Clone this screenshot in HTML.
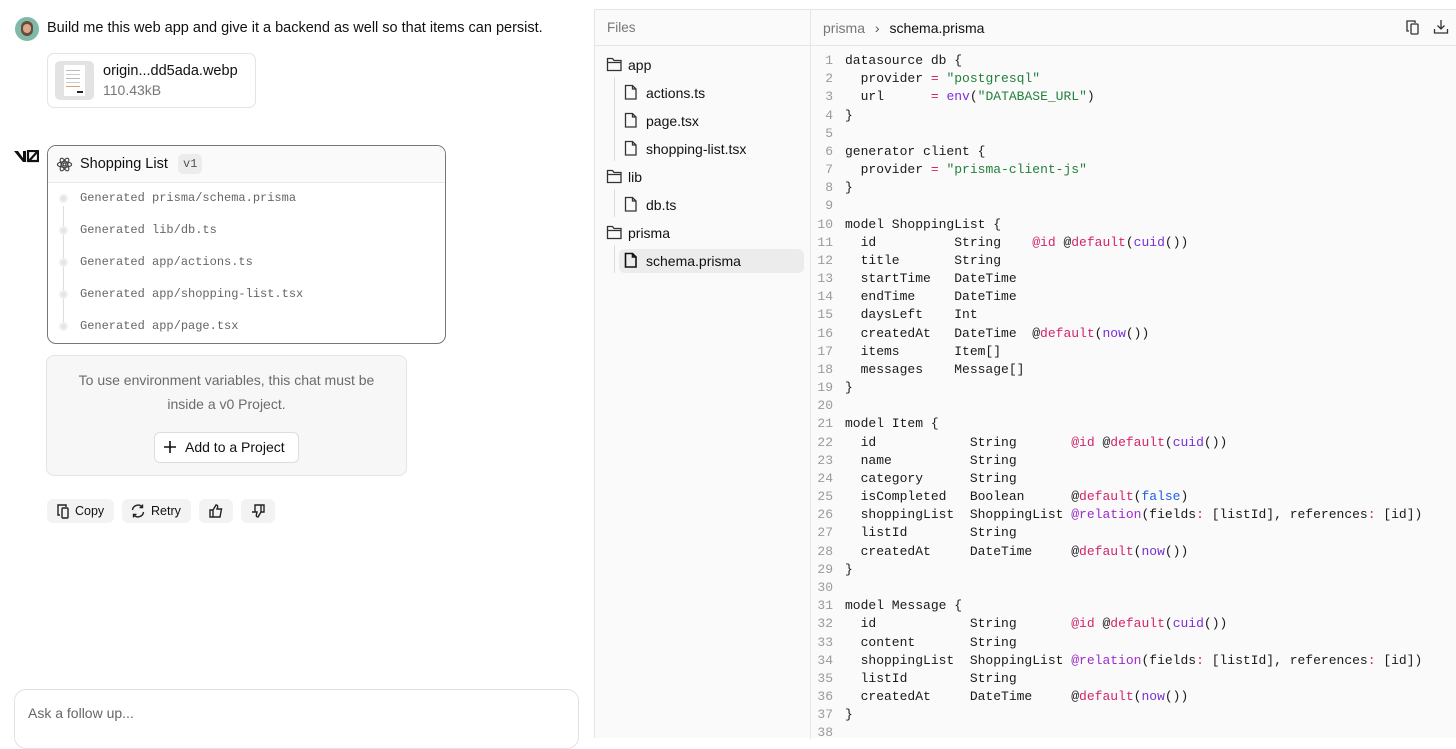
<!DOCTYPE html>
<html><head><meta charset="utf-8"><style>
*{box-sizing:border-box;margin:0;padding:0}
body{width:1456px;height:738px;overflow:hidden;background:#fff;font-family:"Liberation Sans",sans-serif;color:#111;position:relative}
.abs{position:absolute}
.mono{font-family:"Liberation Mono",monospace}
#right{position:absolute;left:594px;top:9px;width:862px;height:729px;background:#fafafa;border-left:1px solid #e6e6e6;border-top:1px solid #e6e6e6}
.hdr{position:absolute;top:0;height:36px;border-bottom:1px solid #e6e6e6;width:100%}
.tree div{position:absolute;font-size:14px;height:24px;line-height:24px}
pre{position:absolute;font-family:"Liberation Mono",monospace;font-size:13px;line-height:18.17px;color:#1a1a1a}
.ln{display:inline-block;width:250px;text-align:right;color:#9a9a9a;padding-right:12px}
.p{color:#d4246b}.g{color:#24803c}.v{color:#7b2fd4}.b{color:#1f5fe6}.r{color:#9b2cc9}
.btn{position:absolute;top:499px;height:24px;background:#f3f3f3;border-radius:6px;font-size:12.5px;line-height:24px}
</style></head><body>
<!-- left chat -->
<div class="abs" style="left:15px;top:17px;width:24px;height:24px;border-radius:50%;background:#7fb9a8;overflow:hidden"><div style="position:absolute;left:6px;top:4px;width:12px;height:15px;border-radius:6px;background:#6b4a3a"></div><div style="position:absolute;left:8px;top:7px;width:8px;height:9px;border-radius:4px;background:#d7a98a"></div></div>
<div class="abs" style="left:47px;top:20px;font-size:14.5px">Build me this web app and give it a backend as well so that items can persist.</div>
<div class="abs" style="left:47px;top:53px;width:209px;height:55px;border:1px solid #e4e4e4;border-radius:7px"></div>
<div class="abs" style="left:55px;top:61px;width:39px;height:39px;background:#e3e3e3;border-radius:5px"><div style="position:absolute;left:9px;top:4px;width:21px;height:31px;background:#fff"></div><div style="position:absolute;left:11px;top:9px;width:14px;height:1px;background:#bbb;box-shadow:0 4px #ccc,0 8px #bbb,0 12px #ccc,0 16px #e0a070"></div><div style="position:absolute;left:22px;top:30px;width:6px;height:2px;background:#222"></div></div>
<div class="abs" style="left:103px;top:63px;font-size:14.5px">origin...dd5ada.webp</div>
<div class="abs" style="left:103px;top:82px;font-size:14px;color:#777">110.43kB</div>
<svg class="abs" style="left:14px;top:150px" width="25" height="13" viewBox="0 0 25 13"><path d="M0 1h4l5 7V1h3v11H9z" fill="#111"/><path d="M14 1h10v10h-10z" fill="none" stroke="#111" stroke-width="2.2"/><path d="M14.5 11.5L23.5 1.5" stroke="#111" stroke-width="2.2"/></svg>
<div class="abs" style="left:47px;top:145px;width:399px;height:199px;border:1.5px solid #777;border-radius:9px;overflow:hidden">
 <div style="height:37px;background:#fafafa;border-bottom:1px solid #e8e8e8;position:relative">
  <svg class="abs" style="left:8px;top:10px" width="17" height="17" viewBox="0 0 24 24" fill="none" stroke="#444" stroke-width="1.6"><circle cx="12" cy="12" r="2"/><ellipse cx="12" cy="12" rx="10" ry="4"/><ellipse cx="12" cy="12" rx="10" ry="4" transform="rotate(60 12 12)"/><ellipse cx="12" cy="12" rx="10" ry="4" transform="rotate(120 12 12)"/></svg>
  <div class="abs" style="left:32px;top:10px;font-size:14.5px">Shopping List</div>
  <div class="abs mono" style="left:130px;top:8px;height:20px;line-height:20px;padding:0 5px;background:#ececec;border-radius:5px;font-size:12px;color:#555">v1</div>
 </div>
 <div class="abs" style="left:15px;top:60px;width:1px;height:120px;background:#ddd"></div>
</div>
<div class="abs mono" style="left:0;top:0;font-size:12px;color:#666">
 <div class="abs" style="left:59px;top:194px;width:9px;height:9px;border-radius:50%;background:#e4e4e4;border:2px solid #f0f0f0"></div><div class="abs" style="left:80px;top:191px;white-space:nowrap">Generated prisma/schema.prisma</div>
 <div class="abs" style="left:59px;top:226px;width:9px;height:9px;border-radius:50%;background:#e4e4e4;border:2px solid #f0f0f0"></div><div class="abs" style="left:80px;top:223px;white-space:nowrap">Generated lib/db.ts</div>
 <div class="abs" style="left:59px;top:258px;width:9px;height:9px;border-radius:50%;background:#e4e4e4;border:2px solid #f0f0f0"></div><div class="abs" style="left:80px;top:255px;white-space:nowrap">Generated app/actions.ts</div>
 <div class="abs" style="left:59px;top:290px;width:9px;height:9px;border-radius:50%;background:#e4e4e4;border:2px solid #f0f0f0"></div><div class="abs" style="left:80px;top:287px;white-space:nowrap">Generated app/shopping-list.tsx</div>
 <div class="abs" style="left:59px;top:322px;width:9px;height:9px;border-radius:50%;background:#e4e4e4;border:2px solid #f0f0f0"></div><div class="abs" style="left:80px;top:319px;white-space:nowrap">Generated app/page.tsx</div>
</div>
<div class="abs" style="left:46px;top:355px;width:361px;height:121px;background:#f7f7f7;border:1px solid #e4e4e4;border-radius:8px;text-align:center;font-size:14px;color:#6b6b6b;line-height:24px;padding-top:12px">To use environment variables, this chat must be<br>inside a v0 Project.</div>
<div class="abs" style="left:154px;top:432px;width:145px;height:31px;background:#fff;border:1px solid #ddd;border-radius:6px;font-size:14px;line-height:29px;padding-left:30px">Add to a Project</div>
<svg class="abs" style="left:163px;top:440px" width="14" height="14" viewBox="0 0 14 14" stroke="#111" stroke-width="1.6"><path d="M7 1v12M1 7h12"/></svg>
<div class="btn" style="left:47px;width:67px;padding-left:28px">Copy</div>
<svg class="abs" style="left:56px;top:503px" width="15" height="16" viewBox="0 0 15 16" fill="none" stroke="#222" stroke-width="1.4"><path d="M4 12H2V2h8v2"/><rect x="6" y="5" width="6" height="10" rx="1"/></svg>
<div class="btn" style="left:122px;width:69px;padding-left:29px">Retry</div>
<svg class="abs" style="left:130px;top:503px" width="16" height="16" viewBox="0 0 16 16" fill="none" stroke="#222" stroke-width="1.4"><path d="M2.5 7a5.5 5.5 0 0 1 10-2.5M13.5 9a5.5 5.5 0 0 1-10 2.5M12.5 1.5v3h-3M3.5 14.5v-3h3"/></svg>
<div class="btn" style="left:199px;width:34px"></div>
<svg class="abs" style="left:208px;top:503px" width="16" height="16" viewBox="0 0 16 16" fill="none" stroke="#222" stroke-width="1.4"><path d="M5 7v7H2V7zM5 7l3-5c1.5 0 2 1 1.5 2.5L9 6h4.5l-1.5 8H5"/></svg>
<div class="btn" style="left:241px;width:34px"></div>
<svg class="abs" style="left:250px;top:503px" width="16" height="16" viewBox="0 0 16 16" fill="none" stroke="#222" stroke-width="1.4"><path d="M5 9V2h9v7h-3l-3 5c-1.5 0-2-1-1.5-2.5L7 9H2z"/><path d="M11 2v7"/></svg>
<div class="abs" style="left:14px;top:689px;width:565px;height:60px;border:1px solid #e2e2e2;border-radius:12px;font-size:14px;color:#666;padding:15px 13px">Ask a follow up...</div>

<!-- right -->
<div id="right">
 <div class="hdr"></div>
 <div class="abs" style="left:215px;top:0;width:1px;height:729px;background:#e6e6e6"></div>
 <div class="abs" style="left:12px;top:10px;font-size:13.5px;color:#777">Files</div>
 <div class="abs" style="left:228px;top:10px;font-size:14px;color:#777">prisma <span style="margin:0 6px;color:#555">›</span> <span style="color:#111">schema.prisma</span></div>
 <svg class="abs" style="left:810px;top:9px" width="16" height="17" viewBox="0 0 16 17" fill="none" stroke="#333" stroke-width="1.3"><path d="M4 12H2V2h8v2"/><rect x="6" y="5" width="7" height="10" rx="1"/></svg>
 <svg class="abs" style="left:838px;top:9px" width="16" height="16" viewBox="0 0 16 16" fill="none" stroke="#333" stroke-width="1.3"><path d="M8 1v9M4.5 6.5L8 10l3.5-3.5M1.5 10v4h13v-4"/></svg>
 <div class="abs" style="left:24px;top:239px;width:185px;height:24px;background:#ececec;border-radius:6px" ></div>
 <div class="abs" style="left:19px;top:67px;width:1px;height:84px;background:#ddd"></div>
 <div class="abs" style="left:19px;top:179px;width:1px;height:28px;background:#ddd"></div>
 <div class="abs" style="left:19px;top:235px;width:1px;height:28px;background:#ddd"></div>
 <div class="tree">
 <div style="left:12px;top:43px;padding-left:21px">app</div>
 <div style="left:30px;top:71px;padding-left:21px">actions.ts</div>
 <div style="left:30px;top:99px;padding-left:21px">page.tsx</div>
 <div style="left:30px;top:127px;padding-left:21px">shopping-list.tsx</div>
 <div style="left:12px;top:155px;padding-left:21px">lib</div>
 <div style="left:30px;top:183px;padding-left:21px">db.ts</div>
 <div style="left:12px;top:211px;padding-left:21px">prisma</div>
 <div style="left:30px;top:239px;padding-left:21px">schema.prisma</div>
 </div>
 <svg class="abs" style="left:0;top:0" width="215" height="280" fill="none" stroke="#333" stroke-width="1.3">
  <g id="fo"><path d="M12.5 48.5h5l1.5 2h7v10h-13.5zM12.5 52.5h14"/></g>
  <use href="#fo" y="112"/><use href="#fo" y="168"/>
  <g id="fi"><path d="M30.5 75.5h7l3.5 3.5v10h-10.5zM37.5 75.5v3.5h3.5"/></g>
  <use href="#fi" y="28"/><use href="#fi" y="56"/><use href="#fi" y="112"/><use href="#fi" y="168" stroke="#111" stroke-width="1.6"/>
 </svg>
</div>
<pre style="left:595px;top:52px"><span class="ln">1</span>datasource db {
<span class="ln">2</span>  provider <span class="p">=</span> <span class="g">"postgresql"</span>
<span class="ln">3</span>  url      <span class="p">=</span> <span class="v">env</span>(<span class="g">"DATABASE_URL"</span>)
<span class="ln">4</span>}
<span class="ln">5</span>
<span class="ln">6</span>generator client {
<span class="ln">7</span>  provider <span class="p">=</span> <span class="g">"prisma-client-js"</span>
<span class="ln">8</span>}
<span class="ln">9</span>
<span class="ln">10</span>model ShoppingList {
<span class="ln">11</span>  id          String    <span class="p">@id</span> @<span class="p">default</span>(<span class="v">cuid</span>())
<span class="ln">12</span>  title       String
<span class="ln">13</span>  startTime   DateTime
<span class="ln">14</span>  endTime     DateTime
<span class="ln">15</span>  daysLeft    Int
<span class="ln">16</span>  createdAt   DateTime  @<span class="p">default</span>(<span class="v">now</span>())
<span class="ln">17</span>  items       Item[]
<span class="ln">18</span>  messages    Message[]
<span class="ln">19</span>}
<span class="ln">20</span>
<span class="ln">21</span>model Item {
<span class="ln">22</span>  id            String       <span class="p">@id</span> @<span class="p">default</span>(<span class="v">cuid</span>())
<span class="ln">23</span>  name          String
<span class="ln">24</span>  category      String
<span class="ln">25</span>  isCompleted   Boolean      @<span class="p">default</span>(<span class="b">false</span>)
<span class="ln">26</span>  shoppingList  ShoppingList <span class="r">@relation</span>(fields<span class="p">:</span> [listId], references<span class="p">:</span> [id])
<span class="ln">27</span>  listId        String
<span class="ln">28</span>  createdAt     DateTime     @<span class="p">default</span>(<span class="v">now</span>())
<span class="ln">29</span>}
<span class="ln">30</span>
<span class="ln">31</span>model Message {
<span class="ln">32</span>  id            String       <span class="p">@id</span> @<span class="p">default</span>(<span class="v">cuid</span>())
<span class="ln">33</span>  content       String
<span class="ln">34</span>  shoppingList  ShoppingList <span class="r">@relation</span>(fields<span class="p">:</span> [listId], references<span class="p">:</span> [id])
<span class="ln">35</span>  listId        String
<span class="ln">36</span>  createdAt     DateTime     @<span class="p">default</span>(<span class="v">now</span>())
<span class="ln">37</span>}
<span class="ln">38</span>
</pre>
</body></html>
